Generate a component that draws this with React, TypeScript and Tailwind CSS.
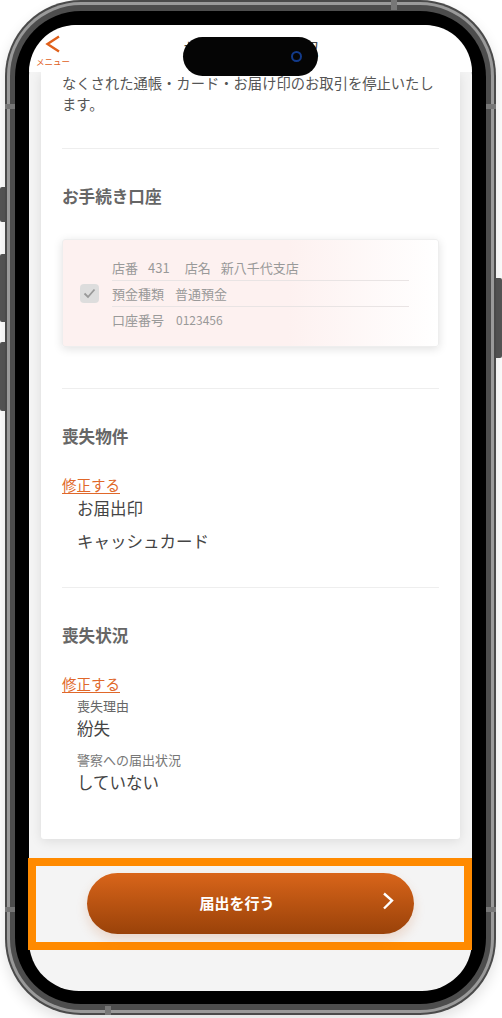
const jp = { fontFamily: '"Noto Sans CJK JP", "Noto Sans", sans-serif' };

function EditLink() {
  return <div className="text-[14.5px] leading-[20px] text-[#e0682a] underline underline-offset-2">修正する</div>;
}

function Divider() {
  return <div className="h-px bg-[#eeeeee]" />;
}

export default function App() {
  return (
    <div className="flex w-[502px] h-[1018px] bg-white overflow-hidden" style={jp}>
      {/* side buttons left */}
      <div className="w-[5px] shrink-0 pt-[187px] flex flex-col">
        <div className="h-[35px] bg-[#555555] rounded-l-[2px]" />
        <div className="mt-[32px] h-[68px] bg-[#555555] rounded-l-[2px]" />
        <div className="mt-[20px] h-[69px] bg-[#555555] rounded-l-[2px]" />
      </div>

      {/* phone frame */}
      <div className="relative w-[491px] h-[1015px] shrink-0 rounded-[76px] bg-[#4a4a4a] p-[2px] shadow-[0_6px_14px_rgba(0,0,0,0.12)]">
        <div className="w-full h-full rounded-[74px] bg-[#9a9a9a] p-[3px]">
          <div className="w-full h-full rounded-[71px] bg-[#4d4d4d] py-[6px] px-[5px]">
            <div className="w-full h-full rounded-[66px] bg-black pt-[14px] pb-[13px] px-[14px]">
              {/* screen */}
              <div className="w-full h-full flex flex-col rounded-[50px] bg-[#f4f4f4]">
                <div className="h-[47px] shrink-0 rounded-t-[50px] bg-white grid grid-cols-[1fr_auto_1fr]">
                  <div className="pl-[7px] pt-[10px]">
                    <div className="w-[34px] flex flex-col items-center">
                      <svg width="16" height="18" viewBox="0 0 16 18" fill="none">
                        <path d="M14 1.5 L2.5 9 L14 16.5" stroke="#e0601a" strokeWidth="2.4" />
                      </svg>
                      <div className="mt-[3px] whitespace-nowrap text-[8.5px] leading-[10px] text-[#e0601a]">メニュー</div>
                    </div>
                  </div>
                  <div className="pt-[14px] text-[17px] leading-[20px] text-[#444444]">お手続き内容確認</div>
                  <div />
                </div>

                <div className="h-[786px] shrink-0 overflow-hidden px-[12px] pb-[19px]">
                  <div className="h-[767px] bg-white rounded-b-[3px] shadow-[0_2px_12px_rgba(0,0,0,0.1)] px-[21px] text-[#444444]">
                    <div className="text-[14.3px] leading-[21px] text-[#555555]">
                      なくされた通帳・カード・お届け印のお取引を停止いたします。
                    </div>
                    <div className="mt-[34px]"><Divider /></div>

                    <h2 className="mt-[35px] text-[16.6px] leading-[24px] font-bold text-[#666666]">お手続き口座</h2>
                    <div className="mt-[31px] h-[108px] flex items-center gap-[13px] pl-[17px] pr-[29px] rounded-[3px] border border-[#eeeeee] bg-gradient-to-r from-[#fdf1f0] via-[#fdf1f0] via-60% to-white shadow-[0_2px_10px_rgba(0,0,0,0.12)]">
                      <div className="w-[19px] h-[19px] shrink-0 rounded-[4px] bg-[#dddddd] flex items-center justify-center">
                        <svg width="13" height="11" viewBox="0 0 13 11" fill="none">
                          <path d="M1.5 5.5 L5 9 L11.5 1.5" stroke="#999999" strokeWidth="1.8" />
                        </svg>
                      </div>
                      <div className="flex-1 pt-[1px] text-[13px] text-[#999999]">
                        <div className="h-[26px] leading-[26px] border-b border-[#e9e4e4] whitespace-nowrap">
                          店番<span className="ml-[10px]">431</span><span className="ml-[15px]">店名</span><span className="ml-[10px]">新八千代支店</span>
                        </div>
                        <div className="h-[26px] leading-[26px] border-b border-[#e9e4e4]">
                          預金種類<span className="ml-[11px]">普通預金</span>
                        </div>
                        <div className="h-[26px] leading-[26px]">
                          口座番号<span className="ml-[12px] text-[12px]">0123456</span>
                        </div>
                      </div>
                    </div>
                    <div className="mt-[41px]"><Divider /></div>

                    <h2 className="mt-[35px] text-[16.6px] leading-[24px] font-bold text-[#666666]">喪失物件</h2>
                    <div className="mt-[27px]"><EditLink /></div>
                    <div className="pl-[15px] text-[16.5px] leading-[24px] text-[#444444]">
                      <div className="mt-[1px]">お届出印</div>
                      <div className="mt-[9px]">キャッシュカード</div>
                    </div>
                    <div className="mt-[34px]"><Divider /></div>

                    <h2 className="mt-[35px] text-[16.6px] leading-[24px] font-bold text-[#666666]">喪失状況</h2>
                    <div className="mt-[27px]"><EditLink /></div>
                    <div className="pl-[15px]">
                      <div className="mt-[3px] text-[13px] leading-[18px] text-[#666666]">喪失理由</div>
                      <div className="mt-[1px] text-[16.5px] leading-[24px] text-[#444444]">紛失</div>
                      <div className="mt-[11px] text-[13px] leading-[18px] text-[#777777]">警察への届出状況</div>
                      <div className="mt-[1px] text-[16.5px] leading-[24px] text-[#444444]">していない</div>
                    </div>
                  </div>
                </div>

                {/* action bar */}
                <div className="-ml-px h-[92px] shrink-0 border-[8px] border-[#ff8a00] flex items-center justify-center">
                  <button className="mb-[2px] w-[327px] h-[61px] flex items-center justify-between pl-[113px] pr-[20px] rounded-full bg-gradient-to-b from-[#d9651a] to-[#9a4209] text-white text-[15px] font-bold shadow-[0_6px_12px_rgba(200,100,40,0.2)]">
                    <span className="mt-[1px]">届出を行う</span>
                    <svg className="mb-[5px]" width="12" height="18" viewBox="0 0 12 18" fill="none">
                      <path d="M2 1.5 L10 8.5 L2 16.5" stroke="white" strokeWidth="2.4" />
                    </svg>
                  </button>
                </div>
              </div>
            </div>
          </div>
        </div>

        {/* band ticks */}
        <div className="absolute left-[386px] top-0 w-[6px] h-[10px] bg-[#777777]" />
        <div className="absolute left-[100px] bottom-0 w-[6px] h-[9px] bg-[#777777]" />
        <div className="absolute left-0 top-[104px] w-[10px] h-[5px] bg-[#777777]" />
        <div className="absolute right-0 top-[104px] w-[10px] h-[5px] bg-[#777777]" />
        <div className="absolute left-0 top-[907px] w-[10px] h-[5px] bg-[#777777]" />
        <div className="absolute right-0 top-[907px] w-[10px] h-[5px] bg-[#777777]" />

        {/* dynamic island */}
        <div className="absolute left-[178px] top-[37px] w-[135px] h-[39px] pr-[16px] rounded-full bg-[#050505] flex items-center justify-end">
          <div className="w-[11px] h-[11px] rounded-full border-2 border-[#123a8a]" />
        </div>
      </div>

      {/* side button right */}
      <div className="flex-1 pt-[278px]">
        <div className="h-[80px] bg-[#555555] rounded-r-[2px]" />
      </div>
    </div>
  );
}
